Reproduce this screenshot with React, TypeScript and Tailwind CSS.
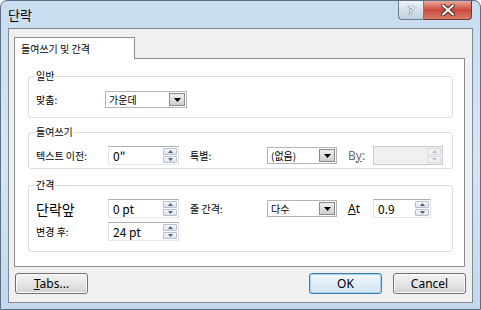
import type { ReactNode } from "react";

// Win7-style "단락" (paragraph) dialog

function SpinArrows({ disabled }: { disabled?: boolean }) {
  const tri = disabled ? "#b9bec6" : "#4d6185";
  return (
    <div className="flex w-[15px] flex-col gap-[1px] py-[1px] pr-[1px]">
      <div
        className={`flex flex-1 items-center justify-center rounded-[1px] border ${
          disabled ? "border-[#d6d9de] bg-[#f2f2f2]" : "border-[#b7c0cc] bg-gradient-to-b from-[#f6f8fa] to-[#dde3ea]"
        }`}
      >
        <svg width="5" height="3" viewBox="0 0 5 3">
          <path d="M0 3 L2.5 0 L5 3 Z" fill={tri} />
        </svg>
      </div>
      <div
        className={`flex flex-1 items-center justify-center rounded-[1px] border ${
          disabled ? "border-[#d6d9de] bg-[#f2f2f2]" : "border-[#b7c0cc] bg-gradient-to-b from-[#f6f8fa] to-[#dde3ea]"
        }`}
      >
        <svg width="5" height="3" viewBox="0 0 5 3">
          <path d="M0 0 L5 0 L2.5 3 Z" fill={tri} />
        </svg>
      </div>
    </div>
  );
}

function Spin({ value, className, disabled }: { value?: string; className: string; disabled?: boolean }) {
  return (
    <div
      className={`flex h-[19px] shrink-0 border ${
        disabled ? "border-[#c8cbd1] bg-[#f0f0f0]" : "border-[#abadb3] border-b-[#e3e9ef] border-l-[#e2e3ea] border-r-[#dbdfe6] bg-white"
      } ${className}`}
    >
      <span className="flex-1 pl-[4px] text-[12px] leading-[17px] text-black">{value}</span>
      <SpinArrows disabled={disabled} />
    </div>
  );
}

function Combo({ value, className }: { value: string; className: string }) {
  return (
    <div className={`flex h-[17px] shrink-0 items-center border border-[#b4b4b4] bg-white ${className}`}>
      <span className="flex-1 pl-[3px] text-[10px] leading-[15px] text-black">{value}</span>
      <span className="mr-[1px] flex h-[13px] w-[16px] items-center justify-center border border-[#8a8a8a] bg-gradient-to-b from-[#eeeeee] to-[#cfcfcf]">
        <svg width="7" height="4" viewBox="0 0 7 4">
          <path d="M0 0 L7 0 L3.5 4 Z" fill="#000" />
        </svg>
      </span>
    </div>
  );
}

function Group({ title, children, className }: { title: string; children: ReactNode; className: string }) {
  return (
    <fieldset className={`mx-[13px] mr-[11px] rounded-[3px] border border-[#d5dfe5] px-[7px] ${className}`}>
      <legend className="-ml-[1px] px-[1px] text-[10px] leading-[12px] text-black">{title}</legend>
      {children}
    </fieldset>
  );
}

function Button({ children, primary, className }: { children: ReactNode; primary?: boolean; className: string }) {
  return (
    <div
      className={`flex h-[21px] items-center justify-center rounded-[3px] border text-[12px] text-black ${
        primary
          ? "border-[#3c7fb1] bg-gradient-to-b from-[#f4f9fc] via-[#e2eef7] to-[#cfe3f1] shadow-[inset_0_0_0_1px_#a6d2ef]"
          : "border-[#707070] bg-gradient-to-b from-[#f2f2f2] via-[#e6e6e6] to-[#d2d2d2] shadow-[inset_0_0_0_1px_#fcfcfc]"
      } ${className}`}
    >
      {children}
    </div>
  );
}

export default function App() {
  return (
    <div className="flex h-[310px] w-[481px] flex-col overflow-hidden rounded-t-[7px] border border-[#5d6f84] bg-gradient-to-b from-[#c9dcf0] via-[#d6e5f4] to-[#c3d8ee] font-['Noto_Sans','Noto_Sans_CJK_KR',sans-serif]">
      {/* title bar */}
      <div className="flex h-[27px] shrink-0 items-start justify-between">
        <span className="pl-[7px] pt-[5px] font-['Noto_Sans_CJK_KR',sans-serif] text-[13px] leading-[17px] text-black">
          단락
        </span>
        <div className="mr-[8px] flex">
          <div className="flex h-[19px] w-[26px] items-center justify-center rounded-bl-[4px] border border-t-0 border-[#6b7d92] bg-gradient-to-b from-[#edf2f8] via-[#d6e0ec] to-[#c0cfdf] text-[13px] font-bold leading-none text-[#f4f6f9] [text-shadow:0_0_1px_#34445a,0_0_1px_#34445a]">
            ?
          </div>
          <div className="flex h-[19px] w-[48px] items-center justify-center rounded-br-[4px] border border-l-0 border-t-0 border-[#6e3833] bg-gradient-to-b from-[#e9a99c] via-[#c9493a] to-[#d97c69]">
            <svg width="14" height="12" viewBox="0 0 14 12">
              <path d="M2 1.5 L12 10.5 M12 1.5 L2 10.5" stroke="#4a2521" strokeWidth="4" strokeLinecap="round" />
              <path d="M2 1.5 L12 10.5 M12 1.5 L2 10.5" stroke="#ffffff" strokeWidth="2.2" strokeLinecap="round" />
            </svg>
          </div>
        </div>
      </div>

      {/* client area */}
      <div className="mx-[7px] mb-[6px] flex flex-1 flex-col border border-[#7f8a96] bg-[#f0f0f0] font-['Noto_Sans_CJK_KR','Noto_Sans',sans-serif]">
        <div className="ml-[5px] mr-[7px] mt-[8px] flex">
          <div className="relative z-10 -mb-[1px] flex h-[22px] w-[121px] items-center border border-b-0 border-[#898c95] bg-white pl-[6px] text-[10px] text-black">
            들여쓰기 및 간격
          </div>
        </div>
        <div className="ml-[5px] mr-[7px] flex flex-col border border-[#898c95] bg-white pb-[14px] pt-[11px] text-[10px] text-black">
          <Group title="일반" className="pb-[9px]">
            <div className="mt-[9px] flex items-center">
              <span className="w-[69px]">맞춤:</span>
              <Combo value="가운데" className="w-[82px]" />
            </div>
          </Group>

          <Group title="들여쓰기" className="mt-[8px] pb-[3px]">
            <div className="mt-[8px] flex items-center">
              <span className="w-[72px]">텍스트 이전:</span>
              <Spin value={'0"'} className="w-[71px]" />
              <span className="ml-[11px] w-[77px]">특별:</span>
              <Combo value="(없음)" className="w-[70px]" />
              <span className="ml-[11px] w-[25px] font-['Noto_Sans',sans-serif] text-[12px] text-[#6d6d6d]">
                B<span className="underline">y</span>:
              </span>
              <Spin disabled className="w-[70px]" />
            </div>
          </Group>

          <Group title="간격" className="mt-[10px] pb-[10px]">
            <div className="mt-[8px] flex items-center">
              <span className="w-[72px] text-[14px] leading-[18px]">단락앞</span>
              <Spin value="0 pt" className="w-[71px]" />
              <span className="ml-[11px] w-[77px]">줄 간격:</span>
              <Combo value="다수" className="w-[70px]" />
              <span className="ml-[11px] w-[25px] font-['Noto_Sans',sans-serif] text-[12px]">
                <span className="underline">A</span>t
              </span>
              <Spin value="0.9" className="w-[58px]" />
            </div>
            <div className="mt-[4px] flex items-center">
              <span className="w-[72px]">변경 후:</span>
              <Spin value="24 pt" className="w-[71px]" />
            </div>
          </Group>
        </div>

        {/* buttons */}
        <div className="flex items-center px-[6px] pt-[6px] font-['Noto_Sans',sans-serif]">
          <Button className="w-[73px]">
            <span>
              <span className="underline">T</span>abs...
            </span>
          </Button>
          <div className="flex-1" />
          <Button primary className="w-[73px]">
            OK
          </Button>
          <Button className="ml-[11px] w-[73px]">Cancel</Button>
        </div>
      </div>
    </div>
  );
}
